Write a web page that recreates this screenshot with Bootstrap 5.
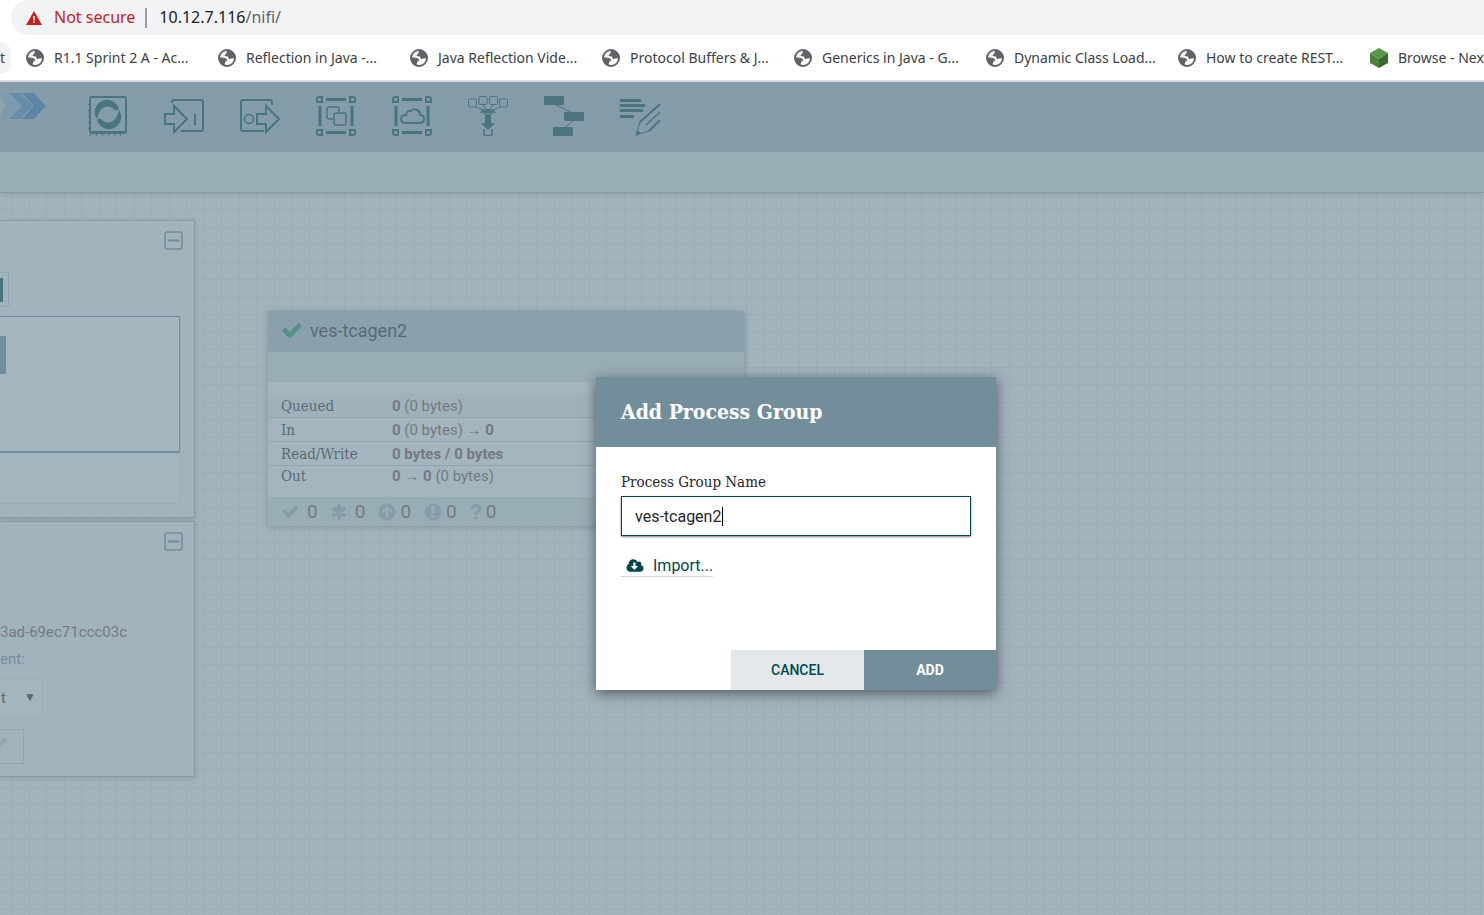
<!DOCTYPE html>
<html lang="en">
<head>
<meta charset="utf-8">
<meta name="viewport" content="width=device-width, initial-scale=1">
<title>NiFi Flow</title>
<link href="https://cdn.jsdelivr.net/npm/bootstrap@5.3.0/dist/css/bootstrap.min.css" rel="stylesheet">
<style>
  :root { --slate: #728e9b; --teal: #004849; --line: #aabbc3; --slab: "Roboto Slab", "DejaVu Serif Condensed", "DejaVu Serif", serif; }
  body { font-family: Roboto, sans-serif; color: #262626; }
  button, input, select { font-family: inherit; }

  /* browser bars */
  .address-row { height: 35px; padding-left: 11px; }
  .omnibox { background: #f1f3f4; border-radius: 18px 0 0 18px; padding-left: 15px; font: 16px/35px "Noto Sans", sans-serif; }
  .omnibox .warn { color: #c5221f; margin-left: 12px; }
  .omnibox .divider { width: 2px; height: 20px; background: #9a9da1; margin: 0 12px 0 10px; }
  .url-host { color: #202124; }
  .url-path { color: #5f6368; }
  .bookmarks { height: 47px; border-bottom: 2px solid #dadce0; font: 14px/20px "Noto Sans", sans-serif; }
  .bookmarks a { color: #3c4043; width: 192px; gap: 10px; }
  .bookmarks a.cut { width: 11px; height: 32px; background: #f1f3f4; border-radius: 0 16px 16px 0; margin-right: 15px; }

  /* application */
  .tools { height: 70px; background: var(--line); }
  .tools button { width: 76px; height: 68px; }
  .tools svg.tool { fill: none; stroke: var(--teal); stroke-width: 2; }
  .tools .solid { fill: var(--teal); }
  .logo { margin: 11px 24px 0 0; }
  .statusbar { height: 41px; background: #e3e8eb; border-bottom: 1px solid var(--line); box-shadow: 0 4px 4px -2px rgba(0,0,0,.2); z-index: 1; }
  .flow-canvas {
    background-color: #f9fafb;
    background-image:
      linear-gradient(90deg, transparent 11px, #e5ebed 11px 12px, transparent 12px 29px, #e5ebed 29px 30px, transparent 30px),
      linear-gradient(transparent 16px, #e5ebed 16px 17px, transparent 17px 34px, #e5ebed 34px 35px);
    background-size: 35px 35px;
    padding-top: 27px;
  }
  .palette { width: 195px; background: rgba(249,250,251,.97); border: 1px solid var(--line); border-left: 0; box-shadow: 0 1px 6px rgba(0,0,0,.25); margin-bottom: 3px; }
  .palette .collapse-btn { margin: 10px 11px 0 0; }
  .navigate { height: 298px; }
  .operate { height: 256px; }
  .zoom-btn { width: 9px; height: 35px; border: 1px solid #ccdadb; border-left: 0; background: transparent; margin-top: 22px; }
  .zoom-btn i { width: 3px; height: 24px; background: var(--teal); }
  .birdseye { width: 181px; height: 189px; margin-top: 8px; background: #fff; border: 1px solid #e5ebed; border-left: 0; }
  .brush { width: 180px; height: 137px; border: 1px solid var(--slate); border-left: 0; border-bottom-width: 2px; padding-top: 19px; }
  .brush i { width: 6px; height: 38px; background: var(--slate); }
  .comp-id { font-size: 15px; line-height: 20px; color: #775351; margin-top: 71px; }
  .comp-parent { font-size: 15px; line-height: 20px; color: var(--slate); margin-top: 7px; }
  .pick { width: 43px; height: 38px; margin-top: 10px; }
  .pick select { appearance: none; border: 1px solid #eaeef0; border-left: 0; background: #fff; padding: 0 0 0 1px; font-size: 15px; color: #262626; opacity: 1; }
  .pick span { right: 7px; top: 9px; font-size: 12px; line-height: 18px; pointer-events: none; }
  .op-btn { width: 24px; height: 35px; border: 1px solid #ccdadb; border-left: 0; background: transparent; margin-top: 12px; padding: 0 4px 6px 0; }

  .pgroup { left: 268px; top: 118px; width: 476px; background: #fff; box-shadow: 0 1px 6px rgba(0,0,0,.4); }
  .pgroup header { height: 41px; padding: 0 0 2px 14px; gap: 8px; background: #b8c6cd; font-size: 18px; }
  .pgroup .comments { height: 30px; background: #e3e8eb; }
  .pgroup table { margin: 12px 0 10px; font-size: 15px; line-height: 22px; color: #775351; }
  .pgroup th { width: 124px; padding: 1px 0 0 13px; font: 15px/22px var(--slab); color: #262626; }
  .pgroup td { padding: 1px 0 0; }
  .pgroup tr { border-bottom: 1px solid #c7d2d7; }
  .pgroup tr:first-child { background: #f4f6f7; }
  .pgroup tr:last-child { border: 0; }
  .pgroup tr:last-child > * { padding-top: 0; line-height: 21px; }
  .pgroup footer { height: 29px; padding-left: 14px; gap: 13px; background: #e3e8eb; color: #775351; font-size: 19px; line-height: 28px; }
  .pgroup footer svg { fill: var(--line); }

  .shade { background: rgba(114,142,155,.65); z-index: 5; padding: 70px 0 0 108px; }
  .dialog-box { width: 400px; background: #fff; box-shadow: 0 3px 12px rgba(0,0,0,.5); }
  .dialog-box h1 { height: 70px; padding: 0 25px; background: var(--slate); color: #fff; font: bold 21px/70px var(--slab); }
  .dialog-box form { padding: 24px 25px 0; height: 203px; }
  .dialog-box label { font: 15px/22px var(--slab); margin-bottom: 3px; }
  .dialog-box input { height: 40px; border: 1px solid var(--teal); padding: 0 13px; font-size: 16px; color: #262626; box-shadow: 0 1px 2px rgba(0,0,0,.5); outline: 0; }
  .caret { left: 101px; top: 11px; width: 1px; height: 19px; background: #000; }
  .import { color: var(--teal); font-size: 16px; line-height: 21px; border-bottom: 1px solid #ccdadb; margin-top: 19px; padding: 0 0 0 5px; gap: 9px; }
  .dialog-box .actions button { width: 133px; height: 40px; border: 0; font-size: 14px; font-weight: 500; }
  .btn-no { background: #e3e8eb; color: var(--teal); }
  .dialog-box .actions .btn-yes { width: 132px; background: var(--slate); color: #fff; font-weight: 700; }
</style>
</head>
<body class="d-flex flex-column min-vh-100 overflow-hidden">

<svg class="d-none">
  <symbol id="globe" viewBox="0 0 18 18">
    <circle cx="9" cy="9" r="8" fill="#fff" stroke="#5f6368" stroke-width="2"/>
    <path fill="#5f6368" d="M9.500 1.500C8 3.500 9 4.500 7.500 5.200 6 6 6.500 7.300 8 7.300c1.500 0 2.300.2 2.500 1.700.3 1.500 2 1 3 .6C14.500 9 15.500 9.200 17 9.500 17.300 5 14 1 9.500 1.500zM1.500 8c2 .8 4.500.6 6 1.200 2 1 1.800 2.800.3 3.300-1 .5-1 1.500-.8 4C3.500 15.500 1 12.500 1.500 8z"/>
  </symbol>
  <symbol id="check" viewBox="0 0 1792 1792">
    <path d="M1671 566q0 40-28 68l-724 724-136 136q-28 28-68 28t-68-28l-136-136-362-362q-28-28-28-68t28-68l136-136q28-28 68-28t68 28l294 295 656-657q28-28 68-28t68 28l136 136q28 28 28 68z"/>
  </symbol>
  <symbol id="minus-box" viewBox="0 0 18 18">
    <rect x="1" y="1" width="16" height="16" rx="2" fill="none" stroke="#728e9b" stroke-width="1.500"/>
    <path d="M3.500 9h11" stroke="#728e9b" stroke-width="2"/>
  </symbol>
  <symbol id="frame" viewBox="0 0 40 40">
    <path stroke-width="3" d="M10 3.500h20M10 36.500h20M4 10v20M36 10v20"/>
    <path stroke-width="2" d="M1 3q0-2 2-2h3v5H1zM39 3q0-2-2-2h-3v5h5zM1 37q0 2 2 2h3v-5H1zM39 37q0 2-2 2h-3v-5h5z"/>
  </symbol>
</svg>

<div class="address-row d-flex bg-white">
  <div class="omnibox d-flex align-items-center flex-fill">
    <svg width="16" height="16" viewBox="0 0 16 16"><path fill="#c5221f" d="M8 1l8 14H0z"/><path stroke="#fff" stroke-width="1.500" d="M8 6v4.500M8 11.500v1.500"/></svg>
    <span class="warn">Not secure</span>
    <span class="divider"></span>
    <span><span class="url-host">10.12.7.116</span><span class="url-path">/nifi/</span></span>
  </div>
</div>

<nav class="bookmarks d-flex align-items-center bg-white overflow-hidden" aria-label="Bookmarks">
  <a href="#" class="cut d-flex align-items-center text-decoration-none flex-shrink-0">t</a>
  <a href="#" class="d-flex align-items-center text-decoration-none text-nowrap flex-shrink-0"><svg width="18" height="18"><use href="#globe"/></svg>R1.1 Sprint 2 A - Ac...</a>
  <a href="#" class="d-flex align-items-center text-decoration-none text-nowrap flex-shrink-0"><svg width="18" height="18"><use href="#globe"/></svg>Reflection in Java -...</a>
  <a href="#" class="d-flex align-items-center text-decoration-none text-nowrap flex-shrink-0"><svg width="18" height="18"><use href="#globe"/></svg>Java Reflection Vide...</a>
  <a href="#" class="d-flex align-items-center text-decoration-none text-nowrap flex-shrink-0"><svg width="18" height="18"><use href="#globe"/></svg>Protocol Buffers &amp; J...</a>
  <a href="#" class="d-flex align-items-center text-decoration-none text-nowrap flex-shrink-0"><svg width="18" height="18"><use href="#globe"/></svg>Generics in Java - G...</a>
  <a href="#" class="d-flex align-items-center text-decoration-none text-nowrap flex-shrink-0"><svg width="18" height="18"><use href="#globe"/></svg>Dynamic Class Load...</a>
  <a href="#" class="d-flex align-items-center text-decoration-none text-nowrap flex-shrink-0"><svg width="18" height="18"><use href="#globe"/></svg>How to create REST...</a>
  <a href="#" class="d-flex align-items-center text-decoration-none text-nowrap flex-shrink-0"><svg width="18" height="20" viewBox="0 0 18 20"><path fill="#569a45" d="M9 0l9 5-9 6-9-6z"/><path fill="#4a8239" d="M0 5l9 6v9l-9-5z"/><path fill="#356b2f" d="M18 5l-9 6v9l9-5z"/></svg>Browse - Nex</a>
</nav>

<div class="position-relative d-flex flex-column flex-fill">
  <div class="tools d-flex">
    <svg class="logo" width="46" height="26" viewBox="0 0 46 26"><path fill="#bfd0d6" d="M0 4l5 9-5 9z"/><path fill="#8fb5cf" d="M0 0h8l13 13L8 26H0l5-13z"/><path fill="#5590c0" d="M9 0h11l13 13-13 13H9l13-13z"/><path fill="#3578ad" d="M22 0h12l12 13-12 13H22l12-13z"/></svg>
    <button class="btn border-0 p-0" aria-label="Processor"><svg class="tool" width="40" height="40" viewBox="0 0 40 40"><rect x="2" y="1" width="36" height="36" rx="2"/><path d="M3 36h34"/><path stroke-width="1" d="M4 37l-3 3M10 37l-2 3M16 37l-2 3M22 37l-2 3M28 37l-2 3M34 37l-2 3M2 7l-2 2M2 13l-2 2M2 19l-2 2M2 25l-2 2M2 31l-2 2"/><path class="solid" stroke="none" d="M9 23A12 12 0 0 1 29 9q3 4 1 5-3 1-5-2Q13 6 9 23zM31 14A12 12 0 0 1 11 28q-3-4-1-5 3-1 5 2Q27 31 31 14z"/></svg></button>
    <button class="btn border-0 p-0" aria-label="Input port"><svg class="tool" width="40" height="40" viewBox="0 0 40 40"><path d="M8 7V6q0-2 2-2h27q2 0 2 2v27q0 2-2 2H17M31 18v11"/><path d="M1 18h9v-8l13 13-13 13v-8H1z"/></svg></button>
    <button class="btn border-0 p-0" aria-label="Output port"><svg class="tool" width="40" height="40" viewBox="0 0 40 40"><path d="M32 9V6q0-2-2-2H3Q1 4 1 6v27q0 2 2 2h21"/><circle cx="9" cy="23" r="4.500" stroke-width="1.500"/><path d="M17 18h9v-8l13 13-13 13v-8h-9z"/></svg></button>
    <button class="btn border-0 p-0" aria-label="Process group"><svg class="tool" width="40" height="40" viewBox="0 0 40 40"><use href="#frame"/><path stroke-width="1.500" d="M17 23h-4q-2 0-2-2v-8q0-2 2-2h8q2 0 2 2v4"/><rect x="18" y="17" width="12" height="12" rx="2" stroke-width="1.500"/></svg></button>
    <button class="btn border-0 p-0" aria-label="Remote process group"><svg class="tool" width="40" height="40" viewBox="0 0 40 40"><use href="#frame"/><path d="M13 27q-4 0-4-4t5-4q1-5 5-4 2-3 6-1 3 1 3 5 4 0 4 4t-4 4z"/></svg></button>
    <button class="btn border-0 p-0" aria-label="Funnel"><svg class="tool" width="40" height="40" viewBox="0 0 40 40"><g stroke-width="1"><rect x="0.500" y="3" width="8" height="8" rx="1"/><rect x="11" y=".5" width="8" height="8" rx="1"/><rect x="21.500" y=".5" width="8" height="8" rx="1"/><rect x="31.500" y="3" width="8" height="8" rx="1"/><path d="M8 11l7 3M15 9l3 4M25 9l-3 4M32 11l-7 3M12 16q8 5 16 0"/><path stroke-width="1.500" d="M16 33v5q0 1.500 1.500 1.500h5Q24 39.500 24 38v-5"/></g><ellipse class="solid" stroke="none" cx="20" cy="15" rx="7" ry="2"/><path class="solid" stroke="none" d="M17 19h6v8h4l-7 7-7-7h4z"/></svg></button>
    <button class="btn border-0 p-0" aria-label="Template"><svg class="tool" width="40" height="40" viewBox="0 0 40 40"><path stroke-width="1" d="M12 9l17 8M29 25l-9 7"/><g class="solid" stroke="none"><rect width="20" height="9" rx="1"/><rect x="20" y="16" width="20" height="9" rx="1"/><rect x="9" y="31" width="20" height="9" rx="1"/></g></svg></button>
    <button class="btn border-0 p-0" aria-label="Label"><svg class="tool" width="42" height="40" viewBox="0 0 42 40"><path stroke-width="3" stroke-linecap="round" d="M2 4.500h19M2 9.500h23M2 14.500h21M2 20.500h12"/><path stroke-width="1" d="M21 26l-4 13 13-4 11-11"/><path d="M21 26L41 8M30 35l11-11" stroke-width="2"/><path stroke-width="1.500" d="M27 29l14-13"/><path class="solid" stroke="none" d="M18 34l4 3-5 3z"/></svg></button>
  </div>
  <div class="statusbar position-relative"></div>

  <main class="flow-canvas position-relative flex-fill">
    <section class="palette navigate">
      <div class="d-flex justify-content-end"><button class="collapse-btn btn border-0 p-0 lh-1" aria-label="Collapse navigate"><svg width="19" height="19"><use href="#minus-box"/></svg></button></div>
      <button class="zoom-btn d-flex align-items-center p-0" aria-label="Actual size"><i></i></button>
      <div class="birdseye"><div class="brush"><i class="d-block"></i></div></div>
    </section>
    <section class="palette operate">
      <div class="d-flex justify-content-end"><button class="collapse-btn btn border-0 p-0 lh-1" aria-label="Collapse operate"><svg width="19" height="19"><use href="#minus-box"/></svg></button></div>
      <div class="comp-id">3ad-69ec71ccc03c</div>
      <label class="comp-parent d-block" for="parent">ent:</label>
      <div class="pick position-relative"><select id="parent" class="w-100 h-100 rounded-0"><option>t</option></select><span class="position-absolute">▼</span></div>
      <button class="op-btn d-flex align-items-center" aria-label="Edit"><svg width="8" height="16" viewBox="0 0 8 16"><path stroke="#ccdadb" stroke-width="4" stroke-linecap="round" d="M-3 12L5 4"/></svg></button>
    </section>

    <article class="pgroup position-absolute">
      <header class="d-flex align-items-center"><svg width="20" height="22" viewBox="100 200 1600 1500" fill="#1a9964"><use href="#check" width="1792" height="1792"/></svg>ves-tcagen2</header>
      <div class="comments"></div>
      <table class="w-100">
        <tr><th>Queued</th><td><b>0</b> (0 bytes)</td></tr>
        <tr><th>In</th><td><b>0</b> (0 bytes) → <b>0</b></td></tr>
        <tr><th>Read/Write</th><td><b>0 bytes / 0 bytes</b></td></tr>
        <tr><th>Out</th><td><b>0</b> → <b>0</b> (0 bytes)</td></tr>
      </table>
      <footer class="d-flex">
        <span class="d-flex align-items-center gap-2"><svg width="17" height="18" viewBox="100 200 1600 1500"><use href="#check" width="1792" height="1792"/></svg>0</span>
        <span class="d-flex align-items-center gap-2"><svg width="16" height="18" viewBox="0 0 16 18"><path stroke="#aabbc3" stroke-width="4" stroke-linecap="round" d="M8 3v12M3 6l10 6M13 6L3 12"/></svg>0</span>
        <span class="d-flex align-items-center gap-1"><svg width="18" height="18" viewBox="0 0 18 18"><circle cx="9" cy="9" r="8.500"/><path fill="none" stroke="#e3e8eb" stroke-width="2" d="M9 15V5M4.500 9L9 4.500 13.500 9"/></svg>0</span>
        <span class="d-flex align-items-center gap-1"><svg width="18" height="18" viewBox="0 0 18 18"><circle cx="9" cy="9" r="8.500"/><path stroke="#e3e8eb" stroke-width="3" d="M9 3v7.500M9 12v3"/></svg>0</span>
        <span class="d-flex align-items-center gap-1"><svg width="12" height="18" viewBox="0 0 12 18"><path fill="none" stroke="#aabbc3" stroke-width="3" d="M2 6q1-3.500 4-3.500t4 3q0 2-2 3T6 12M6 13.500v3"/></svg>0</span>
      </footer>
    </article>
  </main>

  <div class="shade position-absolute top-0 start-0 w-100 h-100 d-flex align-items-center justify-content-center">
    <div class="dialog-box" role="dialog" aria-labelledby="dlg-title">
      <h1 class="m-0" id="dlg-title">Add Process Group</h1>
      <form>
        <label class="d-block" for="pg-name">Process Group Name</label>
        <div class="position-relative"><input id="pg-name" class="w-100 d-block" type="text" value="ves-tcagen2"><span class="caret position-absolute"></span></div>
        <a href="#" class="import d-inline-flex align-items-center text-decoration-none"><svg width="18" height="16" viewBox="0 0 1920 1792"><path fill="#004849" d="M1280 928q0-14-9-23t-23-9h-224v-352q0-13-9.500-22.500t-22.500-9.500h-192q-13 0-22.500 9.500t-9.500 22.500v352h-224q-13 0-22.500 9.500t-9.500 22.500q0 14 9 23l352 352q9 9 23 9t23-9l351-351q10-12 10-24zm640 224q0 159-112.500 271.500t-271.500 112.500h-1088q-185 0-316.500-131.500t-131.500-316.500q0-130 70-240t188-165q-2-30-2-43 0-212 150-362t362-150q156 0 285.500 87t188.500 231q71-62 166-62 106 0 181 75t75 181q0 76-41 138 130 31 213.500 135.500t83.500 238.500z"/></svg>Import...</a>
      </form>
      <div class="actions d-flex justify-content-end">
        <button class="btn-no" type="button">CANCEL</button><button class="btn-yes" type="button">ADD</button>
      </div>
    </div>
  </div>
</div>

<script src="https://cdn.jsdelivr.net/npm/bootstrap@5.3.0/dist/js/bootstrap.bundle.min.js"></script>
</body>
</html>
